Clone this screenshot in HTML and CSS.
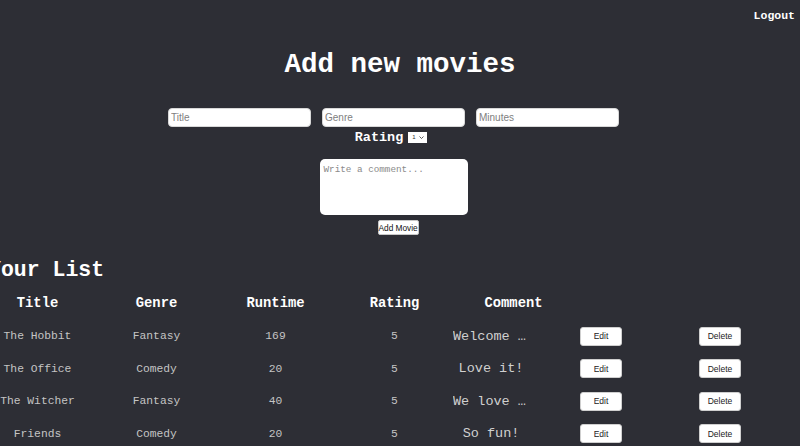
FILE: index.html
```html
<!DOCTYPE html>
<html>
<head>
<meta charset="utf-8">
<link rel="stylesheet" href="styles.css">
</head>
<body>
<div class="topbar"><button class="logout">Logout</button></div>
<h1 class="title">Add new movies</h1>
<form class="add-form">
  <div class="inputs">
    <input type="text" placeholder="Title">
    <input type="text" placeholder="Genre">
    <input type="text" placeholder="Minutes">
  </div>
  <div class="rating-row">
    <label class="rating-label">Rating</label>
    <span class="select-wrap">
      <select class="rating-select"><option>1</option><option>2</option><option>3</option><option>4</option><option>5</option></select>
      <svg class="chev" width="5" height="3" viewBox="0 0 5 3"><path d="M0.5 0.5 L2.5 2.5 L4.5 0.5" fill="none" stroke="#333" stroke-width="0.8"/></svg>
    </span>
  </div>
  <textarea class="comment-box" placeholder="Write a comment..."></textarea>
  <button type="button" class="add-btn">Add Movie</button>
</form>
<h2 class="list-title">Your List</h2>
<table class="movies">
  <thead>
    <tr><th>Title</th><th>Genre</th><th>Runtime</th><th>Rating</th><th>Comment</th><th></th><th></th></tr>
  </thead>
  <tbody>
    <tr><td>The Hobbit</td><td>Fantasy</td><td>169</td><td>5</td><td class="cmt"><div class="cmt-text">Welcome to Middle-earth</div></td><td class="act"><button class="btn">Edit</button></td><td class="act"><button class="btn">Delete</button></td></tr>
    <tr><td>The Office</td><td>Comedy</td><td>20</td><td>5</td><td class="cmt"><div class="cmt-text">Love it!</div></td><td class="act"><button class="btn">Edit</button></td><td class="act"><button class="btn">Delete</button></td></tr>
    <tr><td>The Witcher</td><td>Fantasy</td><td>40</td><td>5</td><td class="cmt"><div class="cmt-text">We love Geralt</div></td><td class="act"><button class="btn">Edit</button></td><td class="act"><button class="btn">Delete</button></td></tr>
    <tr><td>Friends</td><td>Comedy</td><td>20</td><td>5</td><td class="cmt"><div class="cmt-text">So fun!</div></td><td class="act"><button class="btn">Edit</button></td><td class="act"><button class="btn">Delete</button></td></tr>
  </tbody>
</table>
</body>
</html>
```
FILE: styles.css
```css
html, body {
  overflow: hidden;
}
body {
  margin: 0;
  background: #2d2e35;
  color: #ffffff;
  font-family: "Liberation Mono", "Courier New", monospace;
}
.topbar {
  display: flex;
  justify-content: flex-end;
  padding: 5px 5px 0 0;
  height: 21px;
}
.logout {
  background: none;
  border: none;
  padding: 0;
  color: #fff;
  font-family: "Liberation Mono", monospace;
  font-weight: bold;
  font-size: 11.5px;
  line-height: 14px;
  cursor: pointer;
}
.title {
  margin: 23px 0 0 0;
  text-align: center;
  font-size: 27.5px;
  line-height: 32px;
  font-weight: bold;
}
.add-form {
  display: flex;
  flex-direction: column;
  align-items: center;
  padding-right: 13px;
  margin-top: 27px;
}
.inputs {
  display: flex;
  gap: 11px;
}
.inputs input {
  width: 143px;
  height: 19px;
  box-sizing: border-box;
  border: 1px solid #d8d8d8;
  border-radius: 4px;
  padding: 0 2px;
  font-family: "Liberation Sans", Arial, sans-serif;
  font-size: 10px;
  background: #fff;
}
.inputs input::placeholder {
  color: #808080;
}
.rating-row {
  display: flex;
  align-items: center;
  gap: 5px;
  height: 18px;
  margin-top: 1px;
  margin-left: -5px;
}
.rating-label {
  font-weight: bold;
  font-size: 13.5px;
}
.select-wrap {
  position: relative;
  display: inline-flex;
}
.rating-select {
  appearance: none;
  -webkit-appearance: none;
  width: 19px;
  height: 11px;
  font-family: "Liberation Sans", Arial, sans-serif;
  font-size: 6px;
  line-height: 11px;
  padding: 0 0 0 4px;
  border: none;
  border-radius: 0;
  background: #fff;
  color: #333;
}
.chev {
  position: absolute;
  right: 3px;
  top: 4px;
  pointer-events: none;
}
.comment-box {
  margin-top: 13px;
  width: 148px;
  height: 56px;
  box-sizing: border-box;
  border: none;
  border-radius: 5px;
  padding: 5px 4px;
  resize: none;
  font-family: "Liberation Mono", monospace;
  font-size: 9.3px;
  background: #fff;
}
.comment-box::placeholder {
  color: #8a8a8a;
}
.add-btn {
  margin-top: 5px;
  margin-left: 9px;
  width: 41px;
  height: 15px;
  padding: 0;
  white-space: nowrap;
  background: #fff;
  border: 1px solid #c8c8c8;
  border-radius: 2px;
  font-family: "Liberation Sans", Arial, sans-serif;
  font-size: 8.3px;
  color: #111;
}
.list-title {
  margin: 22px 0 0 -12px;
  font-size: 21.5px;
  line-height: 26px;
  font-weight: bold;
}
.movies {
  margin: 3px 0 0 -22px;
  width: 833px;
  table-layout: fixed;
  border-collapse: collapse;
}
.movies th, .movies td {
  width: 119px;
  padding: 0;
  text-align: center;
}
.movies th {
  height: 34px;
  font-size: 13.8px;
  font-weight: bold;
  color: #fff;
}
.movies td {
  height: 32.5px;
  font-size: 11.3px;
  color: #c4c4c4;
}
.movies td.cmt {
  text-align: left;
}
.cmt-text {
  width: 76px;
  margin-left: -1px;
  text-align: center;
  white-space: nowrap;
  overflow: hidden;
  text-overflow: ellipsis;
  font-size: 13.5px;
  color: #d0d0d0;
}
.movies td.act {
  text-align: left;
  padding-left: 7px;
}
.btn {
  width: 42px;
  height: 19px;
  padding: 0;
  background: #fff;
  border: 1px solid #cfcfcf;
  border-radius: 3px;
  font-family: "Liberation Sans", Arial, sans-serif;
  font-size: 8.5px;
  color: #222;
}
```
